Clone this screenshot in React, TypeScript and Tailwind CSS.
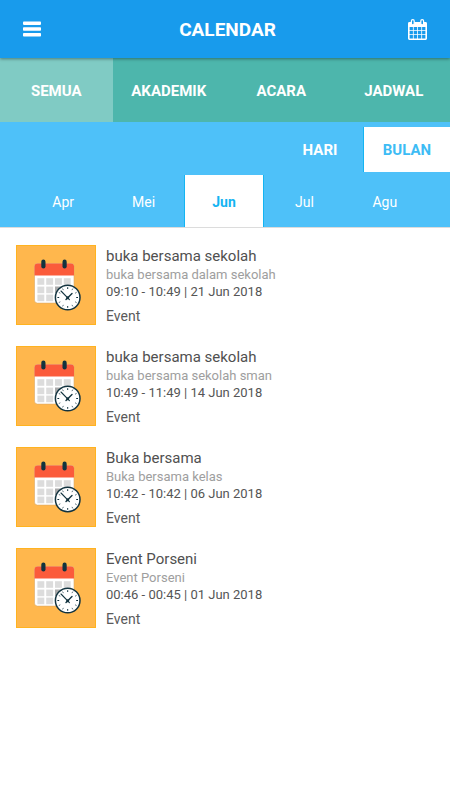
const categories = ["SEMUA", "AKADEMIK", "ACARA", "JADWAL"];
const months = ["Apr", "Mei", "Jun", "Jul", "Agu"];

const events = [
  { title: "buka bersama sekolah", description: "buka bersama dalam sekolah", time: "09:10 - 10:49 | 21 Jun 2018", type: "Event" },
  { title: "buka bersama sekolah", description: "buka bersama sekolah sman", time: "10:49 - 11:49 | 14 Jun 2018", type: "Event" },
  { title: "Buka bersama", description: "Buka bersama kelas", time: "10:42 - 10:42 | 06 Jun 2018", type: "Event" },
  { title: "Event Porseni", description: "Event Porseni", time: "00:46 - 00:45 | 01 Jun 2018", type: "Event" },
];

function MenuIcon() {
  return (
    <svg viewBox="0 0 18 16" className="w-[18px] h-4" fill="currentColor" aria-hidden="true">
      <rect x="0" y="0.5" width="18" height="3.4" rx="0.8" />
      <rect x="0" y="6.3" width="18" height="3.4" rx="0.8" />
      <rect x="0" y="12.1" width="18" height="3.4" rx="0.8" />
    </svg>
  );
}

function CalendarIcon() {
  return (
    <svg viewBox="0 0 19 21" className="w-[19px] h-[21px]" aria-hidden="true">
      <path
        fill="currentColor"
        fillRule="evenodd"
        d="M1.4 3H17.6Q19 3 19 4.4V19.6Q19 21 17.6 21H1.4Q0 21 0 19.6V4.4Q0 3 1.4 3ZM1.6 8V11H4.9V8ZM5.7 8V11H9.1V8ZM9.9 8V11H13.3V8ZM14.1 8V11H17.4V8ZM1.6 11.8V15.2H4.9V11.8ZM5.7 11.8V15.2H9.1V11.8ZM9.9 11.8V15.2H13.3V11.8ZM14.1 11.8V15.2H17.4V11.8ZM1.6 16V19.4H4.9V16ZM5.7 16V19.4H9.1V16ZM9.9 16V19.4H13.3V16ZM14.1 16V19.4H17.4V16Z"
      />
      <rect x="3.4" y="0.7" width="2.8" height="5.2" rx="1.3" fill="#189bec" stroke="currentColor" strokeWidth="1.2" />
      <rect x="12.8" y="0.7" width="2.8" height="5.2" rx="1.3" fill="#189bec" stroke="currentColor" strokeWidth="1.2" />
    </svg>
  );
}

function EventIcon() {
  const columns = [21.4, 30.2, 39, 47.8];
  const rows = [33.2, 41.6, 49.6];
  const ticks = [0, 30, 60, 90, 120, 150, 180, 210, 240, 270, 300, 330];

  return (
    <svg viewBox="0 0 80 80" className="size-20 shrink-0" aria-hidden="true">
      <rect width="80" height="80" fill="#ffb74d" />
      <rect x="0.5" y="0.5" width="79" height="79" fill="none" stroke="#ffb320" />
      <rect x="18.5" y="18.5" width="39.5" height="39.6" rx="3" fill="#fff" stroke="#d9a866" strokeWidth="0.6" />
      <path d="M18.5 30.4V21.5Q18.5 18.5 21.5 18.5H55Q58 18.5 58 21.5V30.4Z" fill="#fb5b3b" />
      {rows.map((y) =>
        columns.map((x) => <rect key={`${x}-${y}`} x={x} y={y} width="6.9" height="6.6" fill="#dcdcdc" />)
      )}
      <rect x="39" y="41.6" width="6.9" height="6.6" fill="#a9a9a9" />
      <rect x="25.3" y="14.6" width="4.2" height="9" rx="2.1" fill="#12333f" />
      <rect x="46.5" y="14.6" width="4.2" height="9" rx="2.1" fill="#12333f" />
      <circle cx="51.7" cy="52.5" r="12.3" fill="#fff" stroke="#12333f" strokeWidth="1.5" />
      {ticks.map((angle) => (
        <path
          key={angle}
          d="M51.7 42.2V44"
          stroke="#12333f"
          strokeWidth={angle % 90 === 0 ? 1 : 0.6}
          transform={`rotate(${angle} 51.7 52.5)`}
        />
      ))}
      <path d="M45 46L53.4 54.6" stroke="#12333f" strokeWidth="1.1" strokeLinecap="round" />
      <path d="M56 48.6L50 54.4" stroke="#12333f" strokeWidth="1.4" strokeLinecap="round" />
      <circle cx="51.7" cy="52.7" r="1.5" fill="#12333f" />
    </svg>
  );
}

export default function App() {
  return (
    <div className="min-h-screen bg-white font-[Roboto,sans-serif]">
      <header className="relative h-[58px] px-[23px] flex items-center justify-between bg-[#189bec] text-white shadow-[0_1px_3px_rgba(0,0,0,0.4)]">
        <button aria-label="Menu">
          <MenuIcon />
        </button>
        <h1 className="text-[19px] font-bold pt-0.5 pl-1.5">CALENDAR</h1>
        <button aria-label="Calendar">
          <CalendarIcon />
        </button>
      </header>

      <nav className="grid grid-cols-4 h-16 bg-[#4db6ac] text-white">
        {categories.map((category) => (
          <button
            key={category}
            className={`text-[15px] font-bold pt-0.5 ${category === "SEMUA" ? "bg-[#80cbc4]" : ""}`}
          >
            {category}
          </button>
        ))}
      </nav>

      <section className="bg-[#4ec1f9] border-b border-[#dcdcdc] text-white">
        <div className="flex justify-end pt-[5px]">
          <button className="w-[86px] h-[45px] pt-0.5 text-[15px] font-bold">HARI</button>
          <button className="w-[87px] h-[45px] pt-0.5 text-[15px] font-bold bg-white text-[#3dbcf5] border-l border-[#14b4f2]">
            BULAN
          </button>
        </div>
        <div className="grid grid-cols-5 pl-[23px] pr-[25px] pt-[3px]">
          {months.map((month) => (
            <button
              key={month}
              className={`h-[52px] pt-0.5 text-sm ${
                month === "Jun" ? "bg-white text-[#14b4f2] font-bold border-x border-[#14b4f2]" : ""
              }`}
            >
              {month}
            </button>
          ))}
        </div>
      </section>

      <main>
        <ul className="flex flex-col gap-[21px] px-4 pt-[17px] pb-4">
          {events.map((event) => (
            <li key={event.time} className="flex gap-[10px] h-20">
              <EventIcon />
              <div>
                <h2 className="text-[15px] leading-[22px] text-[#505050]">{event.title}</h2>
                <p className="text-[13px] leading-4 text-[#9e9e9e]">{event.description}</p>
                <p className="text-[13px] leading-[18px] text-[#555555]">{event.time}</p>
                <p className="text-sm leading-5 pt-[5px] text-[#5a5a5a]">{event.type}</p>
              </div>
            </li>
          ))}
        </ul>
      </main>
    </div>
  );
}
